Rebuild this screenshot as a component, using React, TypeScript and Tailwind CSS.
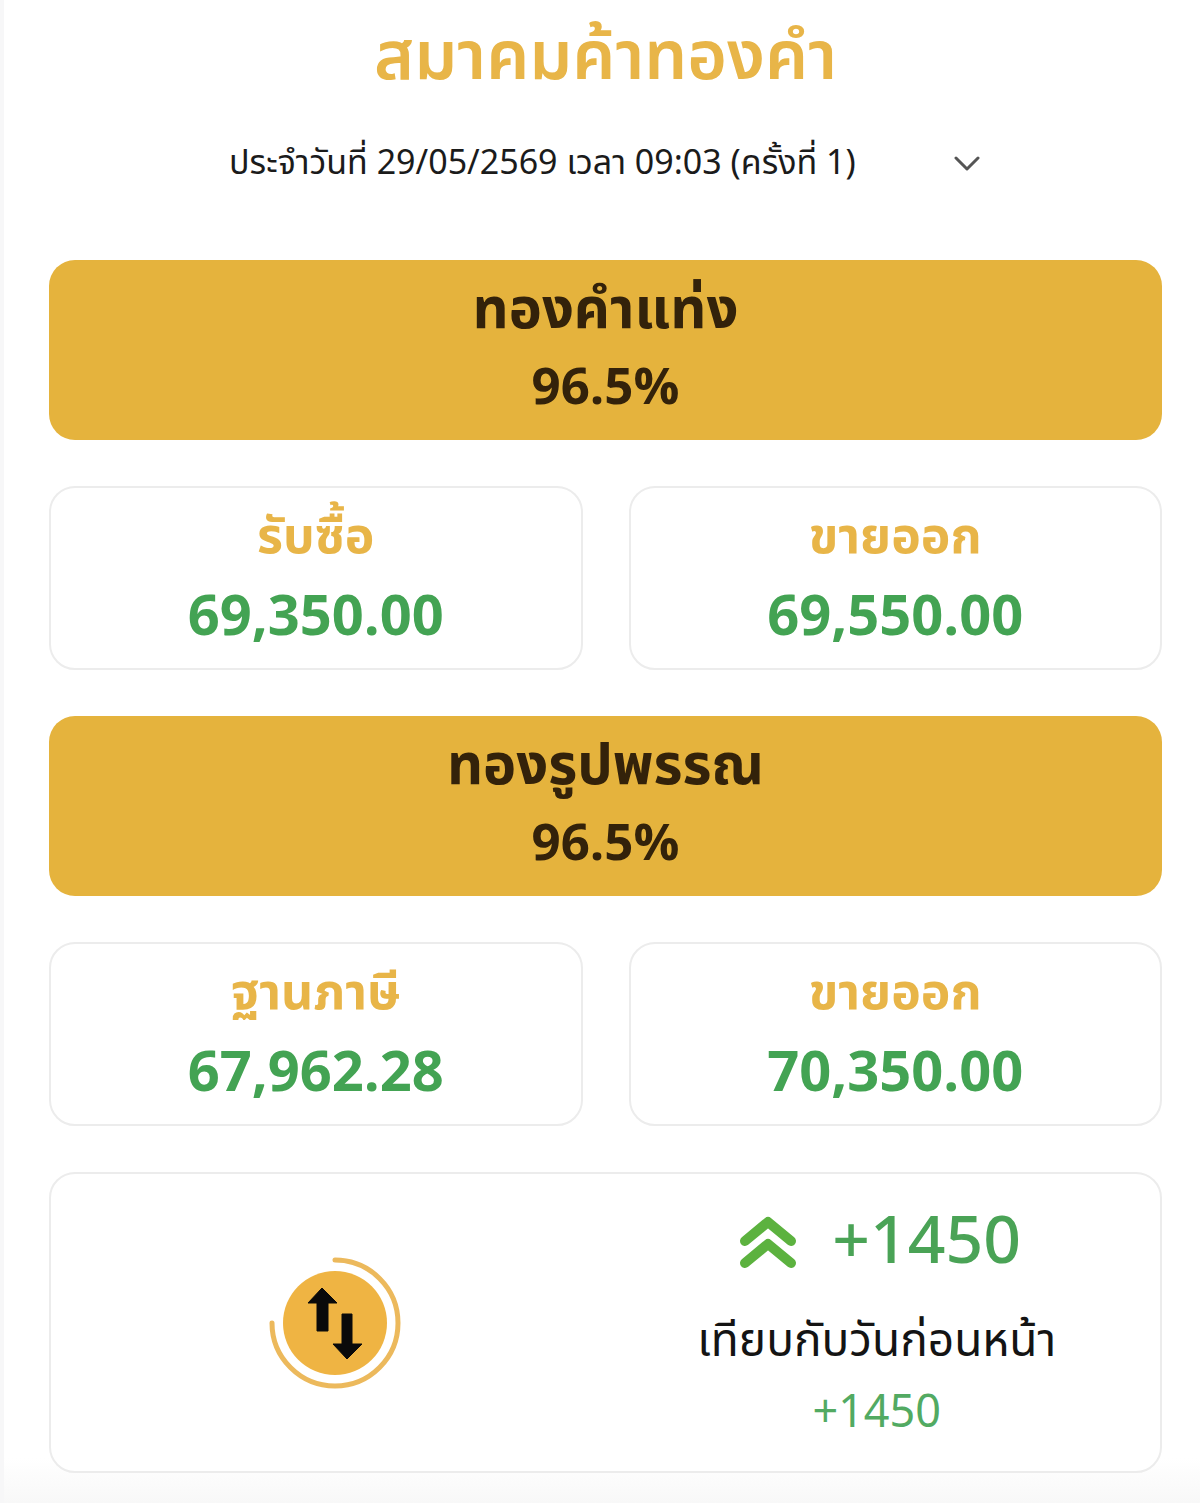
const GOLD = "bg-[#e5b33d]";

function PriceCard({ label, value }: { label: string; value: string }) {
  return (
    <div className="flex h-[184px] flex-col items-center rounded-[26px] border-2 border-[#ececec] bg-white pt-[22px]">
      <div className="text-[50px] leading-[56px] font-bold text-[#e8b548]">{label}</div>
      <div className="mt-[17px] text-[56px] leading-[70px] font-bold text-[#43a353]">{value}</div>
    </div>
  );
}

function GoldBar({ title }: { title: string }) {
  return (
    <div className={`flex h-[180px] flex-col items-center rounded-[26px] ${GOLD} pt-[20px] text-[#33220a]`}>
      <div className="text-[56px] leading-[62px] font-bold">{title}</div>
      <div className="mt-[14px] text-[51px] leading-[66px] font-bold">96.5%</div>
    </div>
  );
}

function SwapIcon() {
  return (
    <svg width="136" height="136" viewBox="0 0 136 136" fill="none">
      <circle cx="67" cy="68" r="52" fill="#efb443" />
      <path d="M67 5 A63 63 0 1 1 4 68" stroke="#ecb95c" strokeWidth="5" strokeLinecap="round" />
      <path d="M54 33 L69 48 H60 V76 H49 V48 H40 Z" fill="#0a0a0a" stroke="#0a0a0a" strokeLinejoin="round" />
      <path d="M74 59 H84 V89 H94 L79 104 L65 89 H74 Z" fill="#0a0a0a" stroke="#0a0a0a" strokeLinejoin="round" />
    </svg>
  );
}

export default function App() {
  return (
    <div className="h-[1503px] w-[1200px] overflow-hidden bg-[#f7f7f8] pl-[4px] font-['Noto_Sans_Thai','Noto_Sans','Noto_Sans_CJK_SC',sans-serif]">
      <div className="h-full bg-gradient-to-b from-white from-[97%] to-[#f8f8f8] pr-[38px] pl-[45px]">
        <h1 className="pt-[18px] text-center text-[68px] leading-[82px] font-semibold text-[#e8b548]">สมาคมค้าทองคำ</h1>

        <div className="mt-[23px] flex h-[80px] items-center gap-[98px] pl-[180px]">
          <span className="text-[34px] whitespace-nowrap text-[#1b1b1b]">ประจำวันที่ 29/05/2569 เวลา 09:03 (ครั้งที่ 1)</span>
          <svg width="26" height="16" viewBox="0 0 26 16" fill="none">
            <path d="M2 3 L13 14 L24 3" stroke="#555555" strokeWidth="3" strokeLinecap="round" strokeLinejoin="round" />
          </svg>
        </div>

        <div className="mt-[57px] flex flex-col gap-[46px]">
          <GoldBar title="ทองคำแท่ง" />
          <div className="grid grid-cols-2 gap-[46px]">
            <PriceCard label="รับซื้อ" value="69,350.00" />
            <PriceCard label="ขายออก" value="69,550.00" />
          </div>
          <GoldBar title="ทองรูปพรรณ" />
          <div className="grid grid-cols-2 gap-[46px]">
            <PriceCard label="ฐานภาษี" value="67,962.28" />
            <PriceCard label="ขายออก" value="70,350.00" />
          </div>
          <div className="grid h-[301px] grid-cols-2 rounded-[26px] border-2 border-[#ececec] bg-white">
            <div className="flex items-center justify-center pl-[16px]">
              <SwapIcon />
            </div>
            <div className="flex flex-col items-center pt-[27px] pr-[12px]">
              <div className="ml-[6px] flex items-center gap-[34px]">
                <svg width="60" height="54" viewBox="0 0 60 54" fill="none">
                  <path d="M7 25 L30 6 L53 25" stroke="#5cb23f" strokeWidth="10" strokeLinecap="round" strokeLinejoin="round" />
                  <path d="M7 47 L30 28 L53 47" stroke="#5cb23f" strokeWidth="10" strokeLinecap="round" strokeLinejoin="round" />
                </svg>
                <span className="text-[66px] leading-[84px] font-medium text-[#4aa356]">+1450</span>
              </div>
              <div className="mt-[30px] text-[46px] leading-[54px] text-[#141414]">เทียบกับวันก่อนหน้า</div>
              <div className="mt-[14px] text-[45px] leading-[60px] text-[#52aa62]">+1450</div>
            </div>
          </div>
        </div>
      </div>
    </div>
  );
}
